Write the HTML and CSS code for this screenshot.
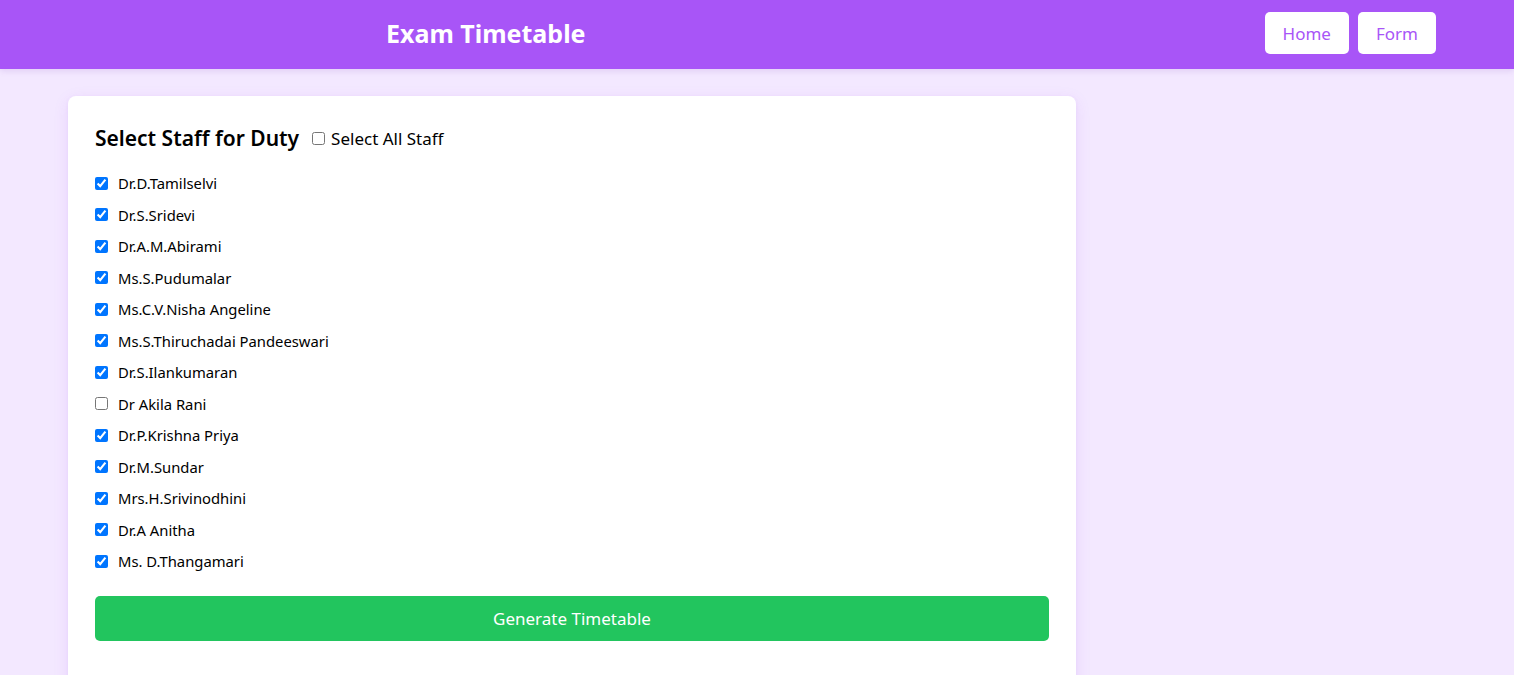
FILE: index.html
```html
<!DOCTYPE html>
<html lang="en">
<head>
<meta charset="utf-8">
<title>Exam Timetable</title>
<link rel="stylesheet" href="styles.css">
</head>
<body>
<header class="nav">
  <h1 class="nav-title">Exam Timetable</h1>
  <nav class="nav-links">
    <a class="nav-btn" href="#">Home</a>
    <a class="nav-btn" href="#">Form</a>
  </nav>
</header>
<main class="page">
  <section class="card">
    <div class="card-head">
      <h2 class="card-title">Select Staff for Duty</h2>
      <label class="select-all"><input type="checkbox"> Select All Staff</label>
    </div>
    <ul class="staff-list">
      <li><label class="staff"><input type="checkbox" checked><span>Dr.D.Tamilselvi</span></label></li>
      <li><label class="staff"><input type="checkbox" checked><span>Dr.S.Sridevi</span></label></li>
      <li><label class="staff"><input type="checkbox" checked><span>Dr.A.M.Abirami</span></label></li>
      <li><label class="staff"><input type="checkbox" checked><span>Ms.S.Pudumalar</span></label></li>
      <li><label class="staff"><input type="checkbox" checked><span>Ms.C.V.Nisha Angeline</span></label></li>
      <li><label class="staff"><input type="checkbox" checked><span>Ms.S.Thiruchadai Pandeeswari</span></label></li>
      <li><label class="staff"><input type="checkbox" checked><span>Dr.S.Ilankumaran</span></label></li>
      <li><label class="staff"><input type="checkbox"><span>Dr Akila Rani</span></label></li>
      <li><label class="staff"><input type="checkbox" checked><span>Dr.P.Krishna Priya</span></label></li>
      <li><label class="staff"><input type="checkbox" checked><span>Dr.M.Sundar</span></label></li>
      <li><label class="staff"><input type="checkbox" checked><span>Mrs.H.Srivinodhini</span></label></li>
      <li><label class="staff"><input type="checkbox" checked><span>Dr.A Anitha</span></label></li>
      <li><label class="staff"><input type="checkbox" checked><span>Ms. D.Thangamari</span></label></li>
    </ul>
    <button class="generate" type="button">Generate Timetable</button>
    <h2 class="result-title">Generated Timetable</h2>
  </section>
</main>
</body>
</html>
```
FILE: styles.css
```css
* { box-sizing: border-box; }
html, body { margin: 0; padding: 0; }
body {
  font-family: "Noto Sans", "Open Sans", Arial, sans-serif;
  background: #f3e8ff;
  color: #111;
  overflow: hidden;
}
.nav {
  height: 69px;
  background: #a855f7;
  display: flex;
  align-items: center;
  padding: 0 78px 3px 386px;
  box-shadow: 0 2px 6px rgba(120, 60, 180, 0.15);
}
.nav-title {
  margin: 0;
  color: #fff;
  font-size: 25px;
  font-weight: 700;
  letter-spacing: 0;
}
.nav-links {
  margin-left: auto;
  display: flex;
  gap: 9px;
}
.nav-btn {
  display: flex;
  align-items: center;
  justify-content: center;
  height: 42px;
  padding: 0 18px;
  background: #fff;
  color: #a855f7;
  border-radius: 5px;
  text-decoration: none;
  font-size: 17px;
}
.page {
  padding: 27px 0 0 68px;
}
.card {
  width: 1008px;
  background: #fff;
  border-radius: 8px;
  padding: 27px 27px 40px;
  box-shadow: 0 4px 16px rgba(147, 51, 234, 0.10), 0 1px 4px rgba(147, 51, 234, 0.06);
}
.card-head {
  display: flex;
  align-items: center;
  gap: 13px;
  height: 30px;
}
.card-title {
  margin: 0;
  font-size: 21px;
  font-weight: 600;
  color: #000;
}
.select-all {
  display: flex;
  align-items: center;
  gap: 6px;
  font-size: 17px;
  color: #000;
}
.select-all input { margin: 0; width: 13px; height: 13px; }
.staff-list {
  list-style: none;
  margin: 18px 0 0;
  padding: 0;
  display: flex;
  flex-direction: column;
  gap: 7.5px;
}
.staff {
  display: flex;
  align-items: center;
  gap: 10px;
  height: 24px;
  font-size: 14.8px;
  color: #000;
}
.staff input { margin: 0; width: 13px; height: 13px; }
.generate {
  display: block;
  width: 100%;
  height: 45px;
  margin-top: 23px;
  border: 0;
  border-radius: 5px;
  background: #22c55e;
  color: #fff;
  font-family: inherit;
  font-size: 17px;
}
.result-title {
  margin: 28px 0 0;
  color: #a855f7;
  font-size: 24px;
  font-weight: 700;
}
```
